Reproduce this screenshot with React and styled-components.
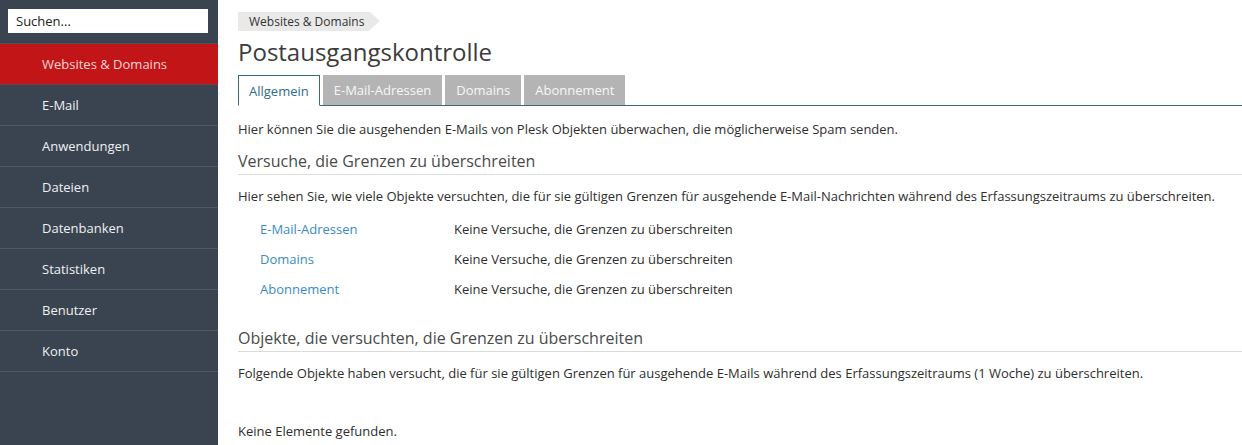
import React from "react";
import styled, { createGlobalStyle } from "styled-components";

const Global = createGlobalStyle`
  html, body { margin: 0; padding: 0; height: 100%; }
  body { font-family: "Open Sans", "DejaVu Sans", sans-serif; background: #fff; color: #333; overflow: hidden; }
  #root { height: 100%; }
`;

const Page = styled.div`
  display: flex;
  height: 445px;
  width: 1242px;
`;

const Sidebar = styled.nav`
  width: 218px;
  flex: none;
  background: #3a4450;
  display: flex;
  flex-direction: column;
`;

const SearchWrap = styled.div`
  padding: 9px 10px 10px 8px;
  border-bottom: 1px solid #4b545e;
`;

const Search = styled.input`
  box-sizing: border-box;
  width: 200px;
  height: 24px;
  border: none;
  outline: none;
  padding: 0 8px;
  font: 13px "Open Sans", sans-serif;
  color: #222;
  background: #fff;
  &::placeholder { color: #222; }
`;

const NavItem = styled.a`
  display: flex;
  align-items: center;
  height: 40px;
  padding-left: 42px;
  border-bottom: 1px solid ${(p) => (p.$active ? "#7a3a3f" : "#4f5862")};
  background: ${(p) => (p.$active ? "#c11517" : "transparent")};
  color: ${(p) => (p.$active ? "#f6d6d6" : "#eef0f2")};
  font-size: 13px;
  text-decoration: none;
`;

const Main = styled.main`
  flex: 1;
  min-width: 0;
  padding: 9px 0 0 20px;
`;

const Crumb = styled.div`
  display: inline-flex;
  align-items: center;
  position: relative;
  height: 19px;
  padding: 0 6px 0 11px;
  background: #e9e9e9;
  font-size: 12px;
  color: #333;
  margin-right: 10px;
  &::after {
    content: "";
    position: absolute;
    right: -10px;
    top: 0;
    border-left: 10px solid #e9e9e9;
    border-top: 9.5px solid transparent;
    border-bottom: 9.5px solid transparent;
  }
`;

const Title = styled.h1`
  margin: 5px 0 0;
  font-size: 24px;
  font-weight: 400;
  line-height: 32px;
  color: #3c3c3c;
`;

const Tabs = styled.div`
  display: flex;
  gap: 3px;
  margin-top: 7px;
  border-bottom: 1px solid #3d6878;
  height: 30px;
`;

const Tab = styled.div`
  box-sizing: border-box;
  height: ${(p) => (p.$active ? "31px" : "30px")};
  padding: 0 ${(p) => (p.$active ? "10px" : "11px")};
  display: flex;
  align-items: center;
  font-size: 13px;
  background: ${(p) => (p.$active ? "#fff" : "#b4b4b4")};
  color: ${(p) => (p.$active ? "#2f6d84" : "#f7f7f7")};
  border: ${(p) => (p.$active ? "1px solid #3d6878" : "none")};
  border-bottom: ${(p) => (p.$active ? "1px solid #fff" : "none")};
  margin-bottom: ${(p) => (p.$active ? "-1px" : "0")};
`;

const Para = styled.p`
  margin: ${(p) => p.$m || "0"};
  font-size: 13px;
  line-height: 18px;
  color: #2e2e2e;
`;

const H2 = styled.h2`
  margin: ${(p) => p.$m || "0"};
  font-size: 16px;
  font-weight: 400;
  line-height: 22px;
  color: #4a4a4a;
  padding-bottom: 2px;
  border-bottom: 1px solid #dcdcdc;
`;

const List = styled.div`
  display: grid;
  grid-template-columns: 194px 1fr;
  row-gap: 12px;
  padding-left: 22px;
  margin-top: 15px;
`;

const Link = styled.a`
  font-size: 13px;
  line-height: 18px;
  color: #3a8bc4;
  text-decoration: none;
`;

const Value = styled.span`
  font-size: 13px;
  line-height: 18px;
  color: #2e2e2e;
`;

const navItems = [
  "Websites & Domains",
  "E-Mail",
  "Anwendungen",
  "Dateien",
  "Datenbanken",
  "Statistiken",
  "Benutzer",
  "Konto",
];

const rows = ["E-Mail-Adressen", "Domains", "Abonnement"];
const none = "Keine Versuche, die Grenzen zu überschreiten";

export default function App() {
  return (
    <>
      <Global />
      <Page>
        <Sidebar>
          <SearchWrap>
            <Search placeholder="Suchen..." />
          </SearchWrap>
          {navItems.map((n, i) => (
            <NavItem key={n} $active={i === 0}>
              {n}
            </NavItem>
          ))}
        </Sidebar>
        <Main>
          <Crumb>Websites &amp; Domains</Crumb>
          <Title>Postausgangskontrolle</Title>
          <Tabs>
            <Tab $active>Allgemein</Tab>
            <Tab>E-Mail-Adressen</Tab>
            <Tab>Domains</Tab>
            <Tab>Abonnement</Tab>
          </Tabs>
          <Para $m="14px 0 0">
            Hier können Sie die ausgehenden E-Mails von Plesk Objekten überwachen, die möglicherweise Spam senden.
          </Para>
          <H2 $m="12px 0 0">Versuche, die Grenzen zu überschreiten</H2>
          <Para $m="12px 0 0">
            Hier sehen Sie, wie viele Objekte versuchten, die für sie gültigen Grenzen für ausgehende E-Mail-Nachrichten während des Erfassungszeitraums zu überschreiten.
          </Para>
          <List>
            {rows.map((r) => (
              <React.Fragment key={r}>
                <Link>{r}</Link>
                <Value>{none}</Value>
              </React.Fragment>
            ))}
          </List>
          <H2 $m="29px 0 0">Objekte, die versuchten, die Grenzen zu überschreiten</H2>
          <Para $m="12px 0 0">
            Folgende Objekte haben versucht, die für sie gültigen Grenzen für ausgehende E-Mails während des Erfassungszeitraums (1 Woche) zu überschreiten.
          </Para>
          <Para $m="40px 0 0">Keine Elemente gefunden.</Para>
        </Main>
      </Page>
    </>
  );
}
